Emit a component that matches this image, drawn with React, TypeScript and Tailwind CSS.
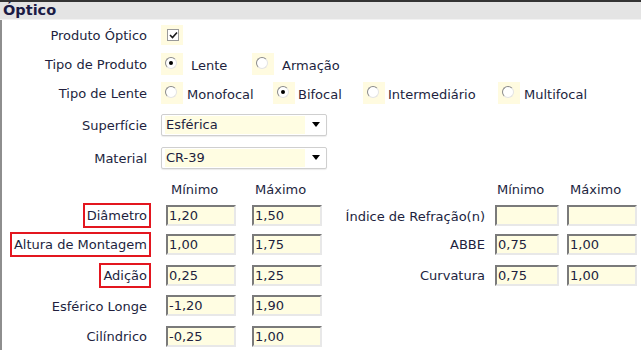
import React from "react";

const font = { fontFamily: '"DejaVu Sans", Verdana, sans-serif' };

function Label({ text, boxed }: { text: string; boxed?: boolean }) {
  return (
    <div className="flex w-[150px] shrink-0 justify-end pr-[1px]">
      {boxed ? (
        <span className="border-2 border-[#e3161f] px-[2px] pt-[1px] leading-[20px]">{text}</span>
      ) : (
        <span className="pr-[4px] pt-[2px]">{text}</span>
      )}
    </div>
  );
}

function Radio({ checked }: { checked?: boolean }) {
  return (
    <span className="flex h-[22px] w-[22px] shrink-0 items-center justify-center bg-[#fffbe0]">
      <span className="flex h-[12px] w-[12px] -translate-x-[1px] -translate-y-[1px] items-center justify-center rounded-full border border-t-[#8a8a8a] border-l-[#8a8a8a] border-r-[#e4e4e4] border-b-[#e4e4e4] bg-white">
        {checked && <span className="h-[4px] w-[4px] rounded-full bg-black" />}
      </span>
    </span>
  );
}

function Option({ label, checked, w, gap }: { label: string; checked?: boolean; w?: string; gap: string }) {
  return (
    <div className={`flex items-center ${w ?? ""}`}>
      <Radio checked={checked} />
      <span className={`${gap} pt-[3px]`}>{label}</span>
    </div>
  );
}

function Field({ value, w = "w-[70px]", className = "" }: { value?: string; w?: string; className?: string }) {
  return (
    <div
      className={`flex h-[21px] ${w} shrink-0 items-center border-2 border-t-[#7a7a7a] border-l-[#7a7a7a] border-r-[#e8e8e8] border-b-[#e8e8e8] bg-[#fffde2] pl-[1px] pt-[1px] ${className}`}
    >
      {value}
    </div>
  );
}

function Select({ value }: { value: string }) {
  return (
    <div className="flex h-[22px] w-[166px] items-center rounded-[2px] border border-[#cfcfcf] bg-white pl-[3px] pr-[6px] shadow-[0_1px_1px_rgba(0,0,0,0.08)]">
      <div className="flex h-[18px] w-[140px] items-center bg-[#fffde2] pl-[1px] pt-[1px]">{value}</div>
      <div className="ml-auto h-0 w-0 border-x-[4px] border-t-[5px] border-x-transparent border-t-black" />
    </div>
  );
}

export default function App() {
  const measures: { label: string; boxed?: boolean; min: string; max: string; right?: string; rmin?: string; rmax?: string; h: string }[] = [
    { label: "Diâmetro", boxed: true, min: "1,20", max: "1,50", right: "Índice de Refração(n)", rmin: "", rmax: "", h: "h-[27px]" },
    { label: "Altura de Montagem", boxed: true, min: "1,00", max: "1,75", right: "ABBE", rmin: "0,75", rmax: "1,00", h: "h-[30px]" },
    { label: "Adição", boxed: true, min: "0,25", max: "1,25", right: "Curvatura", rmin: "0,75", rmax: "1,00", h: "h-[32px]" },
    { label: "Esférico Longe", min: "-1,20", max: "1,90", h: "h-[29px]" },
    { label: "Cilíndrico", min: "-0,25", max: "1,00", h: "h-[32px]" },
  ];

  return (
    <div className="h-[350px] w-[641px] overflow-hidden bg-white text-[13px] text-[#221f3e]" style={font}>
      <div className="border-t-2 border-[#333333]">
        <div className="flex h-[18px] items-center border-b border-[#f2f2f2] bg-[#e4e4e4] pl-[3px] text-[14.5px] font-bold text-[#1b1b45]">
          Óptico
        </div>
      </div>

      <div className="h-[330px] border-l-2 border-[#8e8e8e]">
        {/* produto */}
        <div className="flex h-[30px] items-center">
          <Label text="Produto Óptico" />
          <div className="ml-[9px] flex h-[20px] w-[22px] items-center justify-center bg-[#fffbe0]">
            <span className="flex h-[12px] w-[12px] translate-x-[1px] items-center justify-center border border-[#9a9a9a] bg-white">
              <svg width="9" height="8" viewBox="0 0 9 8">
                <path d="M1 4 L3.5 6.5 L8 1.5" fill="none" stroke="#1a1a1a" strokeWidth="1.6" />
              </svg>
            </span>
          </div>
        </div>

        <div className="flex h-[28px] items-center">
          <Label text="Tipo de Produto" />
          <div className="ml-[9px] flex items-center">
            <Option label="Lente" checked w="w-[91px]" gap="ml-[8px]" />
            <Option label="Armação" gap="ml-[8px]" />
          </div>
        </div>

        <div className="flex h-[30px] items-center">
          <Label text="Tipo de Lente" />
          <div className="ml-[9px] flex items-center">
            <Option label="Monofocal" w="w-[112px]" gap="ml-[4px]" />
            <Option label="Bifocal" checked w="w-[90px]" gap="ml-[3px]" />
            <Option label="Intermediário" w="w-[135px]" gap="ml-[3px]" />
            <Option label="Multifocal" gap="ml-[4px]" />
          </div>
        </div>

        <div className="flex h-[32px] items-center pt-[1px]">
          <Label text="Superfície" />
          <div className="ml-[9px]">
            <Select value="Esférica" />
          </div>
        </div>

        <div className="flex h-[35px] items-center">
          <Label text="Material" />
          <div className="ml-[9px]">
            <Select value="CR-39" />
          </div>
        </div>

        {/* cabeçalho min/max */}
        <div className="flex h-[27px] items-center pt-[3px]">
          <div className="w-[150px] shrink-0" />
          <span className="ml-[19px] w-[84px] shrink-0">Mínimo</span>
          <span className="w-[242px] shrink-0">Máximo</span>
          <span className="w-[73px] shrink-0">Mínimo</span>
          <span>Máximo</span>
        </div>

        {measures.map((m) => (
          <div key={m.label} className={`flex ${m.h} items-center`}>
            <Label text={m.label} boxed={m.boxed} />
            <Field value={m.min} className="ml-[14px]" />
            <Field value={m.max} className="ml-[16px]" />
            {m.right && (
              <>
                <div className="w-[167px] shrink-0 pr-[4px] pt-[2px] text-right">{m.right}</div>
                <Field value={m.rmin} w="w-[64px]" className="ml-[6px]" />
                <Field value={m.rmax} className="ml-[8px]" />
              </>
            )}
          </div>
        ))}
      </div>
    </div>
  );
}
